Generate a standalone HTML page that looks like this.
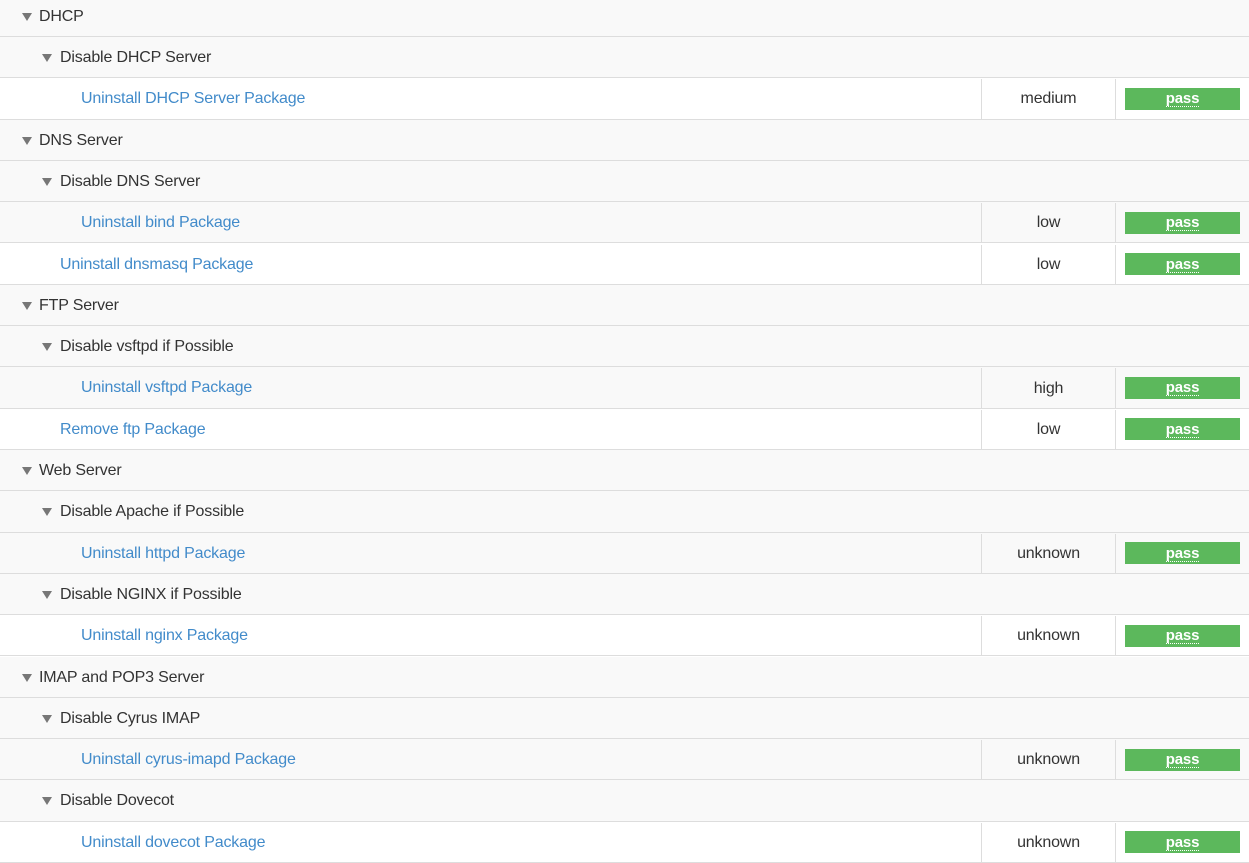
<!DOCTYPE html>
<html><head><style>
body{margin:0;width:1249px;height:859px;overflow:hidden;background:#fff;font-family:"Liberation Sans",Arial,sans-serif;font-size:16px;letter-spacing:-0.17px;color:#333;position:relative}
.r{position:absolute;left:0;width:1249px;height:40.3px;border-bottom:1px solid #ddd;display:flex;align-items:center}
.g{background:#f9f9f9}
.w{background:#fff}
.s{background:#f9f9f9}
.tri{position:absolute;width:0;height:0;border-left:5px solid transparent;border-right:5px solid transparent;border-top:8px solid #777;top:17px}
.t{position:absolute;white-space:nowrap;top:12px}
.l{color:#428bca}
.sev{position:absolute;left:981px;width:133px;top:1px;bottom:-1px;border-left:1px solid #ddd;border-right:1px solid #ddd;display:flex;align-items:center;justify-content:center}
.b{position:absolute;left:1125px;width:115px;height:22px;top:9.5px;background:#5cb85c;color:#fff;font-weight:bold;font-size:15px;display:flex;align-items:center;justify-content:center;padding-top:2px;box-sizing:border-box}
.b span{border-bottom:1px dotted #fff;line-height:14px}
</style></head><body>
<div class="r g" style="top:-4.3px"><div class="tri" style="left:22px"></div><div class="t" style="left:39px">DHCP</div></div>
<div class="r g" style="top:37px"><div class="tri" style="left:42px"></div><div class="t" style="left:60px">Disable DHCP Server</div></div>
<div class="r w" style="top:78.3px"><div class="t l" style="left:81px">Uninstall DHCP Server Package</div><div class="sev">medium</div><div class="b"><span>pass</span></div></div>
<div class="r g" style="top:119.6px"><div class="tri" style="left:22px"></div><div class="t" style="left:39px">DNS Server</div></div>
<div class="r g" style="top:160.9px"><div class="tri" style="left:42px"></div><div class="t" style="left:60px">Disable DNS Server</div></div>
<div class="r s" style="top:202.2px"><div class="t l" style="left:81px">Uninstall bind Package</div><div class="sev">low</div><div class="b"><span>pass</span></div></div>
<div class="r w" style="top:243.5px"><div class="t l" style="left:60px">Uninstall dnsmasq Package</div><div class="sev">low</div><div class="b"><span>pass</span></div></div>
<div class="r g" style="top:284.8px"><div class="tri" style="left:22px"></div><div class="t" style="left:39px">FTP Server</div></div>
<div class="r g" style="top:326.1px"><div class="tri" style="left:42px"></div><div class="t" style="left:60px">Disable vsftpd if Possible</div></div>
<div class="r s" style="top:367.4px"><div class="t l" style="left:81px">Uninstall vsftpd Package</div><div class="sev">high</div><div class="b"><span>pass</span></div></div>
<div class="r w" style="top:408.7px"><div class="t l" style="left:60px">Remove ftp Package</div><div class="sev">low</div><div class="b"><span>pass</span></div></div>
<div class="r g" style="top:450px"><div class="tri" style="left:22px"></div><div class="t" style="left:39px">Web Server</div></div>
<div class="r g" style="top:491.3px"><div class="tri" style="left:42px"></div><div class="t" style="left:60px">Disable Apache if Possible</div></div>
<div class="r s" style="top:532.6px"><div class="t l" style="left:81px">Uninstall httpd Package</div><div class="sev">unknown</div><div class="b"><span>pass</span></div></div>
<div class="r g" style="top:573.9px"><div class="tri" style="left:42px"></div><div class="t" style="left:60px">Disable NGINX if Possible</div></div>
<div class="r w" style="top:615.2px"><div class="t l" style="left:81px">Uninstall nginx Package</div><div class="sev">unknown</div><div class="b"><span>pass</span></div></div>
<div class="r g" style="top:656.5px"><div class="tri" style="left:22px"></div><div class="t" style="left:39px">IMAP and POP3 Server</div></div>
<div class="r g" style="top:697.8px"><div class="tri" style="left:42px"></div><div class="t" style="left:60px">Disable Cyrus IMAP</div></div>
<div class="r s" style="top:739.1px"><div class="t l" style="left:81px">Uninstall cyrus-imapd Package</div><div class="sev">unknown</div><div class="b"><span>pass</span></div></div>
<div class="r g" style="top:780.4px"><div class="tri" style="left:42px"></div><div class="t" style="left:60px">Disable Dovecot</div></div>
<div class="r w" style="top:821.7px"><div class="t l" style="left:81px">Uninstall dovecot Package</div><div class="sev">unknown</div><div class="b"><span>pass</span></div></div>
</body></html>
